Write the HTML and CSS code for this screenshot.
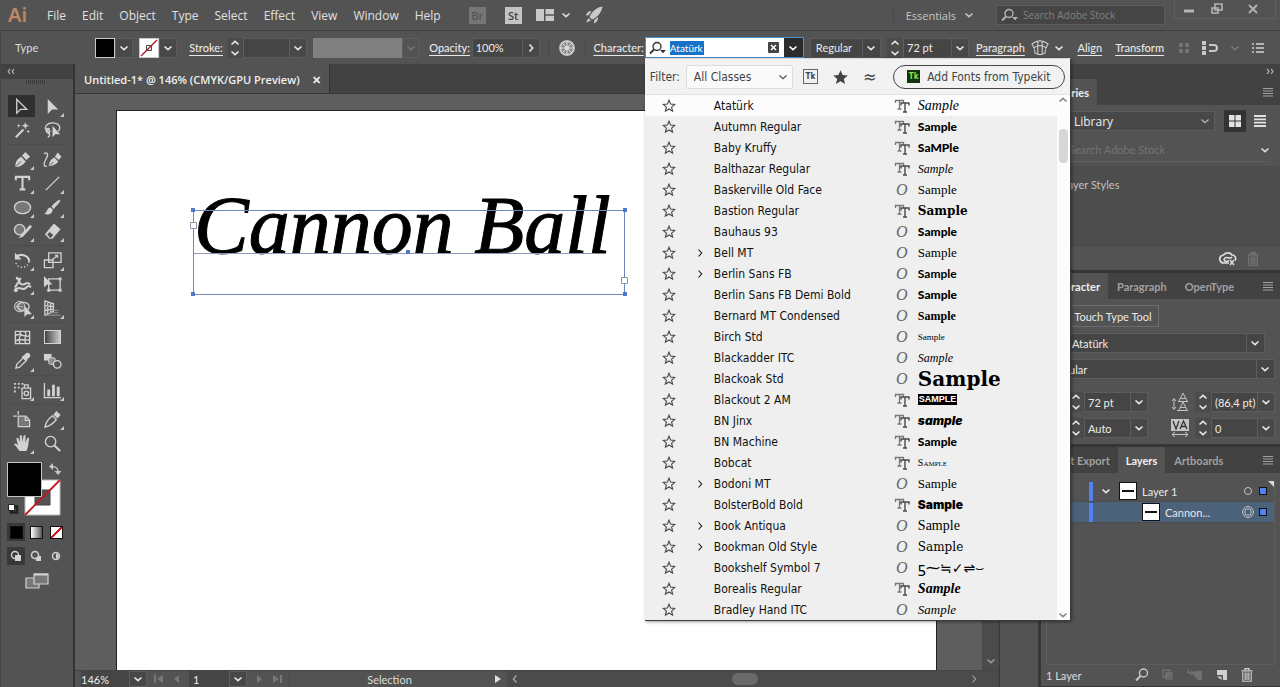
FILE: index.html
```html
<!DOCTYPE html>
<html lang="en">
  <head>
    <meta charset="UTF-8" />
    <meta name="viewport" content="width=device-width, initial-scale=1.0" />
    <title>Untitled-1* @ 146%</title>
    <link rel="stylesheet" href="styles.css">
  </head>
  <body>
    <!-- shared icons -->
    <svg class="sprite" aria-hidden="true">
      <symbol id="star" viewBox="0 0 14 14"><path d="M7 1.2l1.6 3.9 4.2.3-3.2 2.7 1 4.1L7 10l-3.6 2.2 1-4.1L1.2 5.4l4.2-.3z" fill="none" stroke="currentColor" stroke-width="1.1" /></symbol>
      <symbol id="chev" viewBox="0 0 10 10"><path d="M1.5 3.5L5 6.7l3.5-3.2" fill="none" stroke="currentColor" stroke-width="1.6" /></symbol>
      <symbol id="chev-up" viewBox="0 0 10 10"><path d="M1.5 6.5L5 3.3l3.5 3.2" fill="none" stroke="currentColor" stroke-width="1.6" /></symbol>
      <symbol id="chev-right" viewBox="0 0 10 10"><path d="M3.5 1.5L6.7 5 3.5 8.5" fill="none" stroke="currentColor" stroke-width="1.6" /></symbol>
      <symbol id="chev-thin" viewBox="0 0 10 10"><path d="M3.5 1.5L6.7 5 3.5 8.5" fill="none" stroke="currentColor" stroke-width="1.1" /></symbol>
      <symbol id="chev-left" viewBox="0 0 10 10"><path d="M6.5 1.5L3.3 5l3.2 3.5" fill="none" stroke="currentColor" stroke-width="1.2" /></symbol>
      <symbol id="lens" viewBox="0 0 18 14"><circle cx="8" cy="5.5" r="4" fill="none" stroke="currentColor" stroke-width="1.4" /><path d="M5 8.5L1 12.5" stroke="currentColor" stroke-width="1.8" /><path d="M11 9h6l-3 3.2z" fill="currentColor" /></symbol>
      <symbol id="lines" viewBox="0 0 12 10"><path d="M1 1.5h10M1 4h10M1 6.5h10M1 9h10" stroke="currentColor" stroke-width="1.2" /></symbol>
      <symbol id="tt" viewBox="0 0 16 14"><path d="M1.500 4V1.500h8V4M5.500 1.500v8.500M3.500 10h4" fill="none" stroke="#777" stroke-width="1.300" /><path d="M7 6.500V4h8v2.500M11 4v9M9 13h4" fill="none" stroke="#4a4a4a" stroke-width="1.400" /></symbol>
      <symbol id="trash" viewBox="0 0 12 14"><path d="M4 2V.7h4V2M.5 2.8h11" fill="none" stroke="currentColor" stroke-width="1.3" /><path d="M1.8 4v9.3h8.4V4M4.2 4.5v7.5M6 4.5v7.5M7.8 4.5v7.5" fill="none" stroke="currentColor" stroke-width="1.1" /></symbol>
    </svg>

    <header class="menubar">
      <span class="logo">Ai</span>
      <nav class="menus">
        <a href="#">File</a><a href="#">Edit</a><a href="#">Object</a><a href="#">Type</a><a href="#">Select</a><a href="#">Effect</a><a href="#">View</a><a href="#">Window</a><a href="#">Help</a>
      </nav>
      <div class="app-buttons">
        <button class="app-badge off">Br</button>
        <button class="app-badge">St</button>
        <button class="arrange" aria-label="Arrange documents">
          <svg width="18" height="12" viewBox="0 0 18 12"><path d="M0 0h8v12H0zM9.500 0h8.500v5.300H9.500zM9.500 6.700h8.500V12H9.500z" fill="#c8c8c8" /></svg>
          <svg width="10" height="10"><use href="#chev" /></svg>
        </button>
        <button class="icon" aria-label="GPU performance">
          <svg width="18" height="18" viewBox="0 0 18 18"><path d="M17.500.5C11 1.500 6.500 6 4.500 11l2.500 2.500C12 11.500 16.500 7 17.500.5zM6.500 5C3.500 5 1.500 7 .8 9.500l3-.3zM13 11c.5 3-1.500 5.500-4 6.500l.2-3.500zM3.500 12L1 16.500l5-2z" fill="#c8c8c8" /></svg>
        </button>
      </div>
      <button class="essentials">Essentials <svg width="10" height="10"><use href="#chev" /></svg></button>
      <label class="stock-search">
        <svg width="18" height="14"><use href="#lens" /></svg>
        <input type="text" placeholder="Search Adobe Stock" aria-label="Search Adobe Stock" />
      </label>
      <div class="window-buttons">
        <button aria-label="Minimize"><svg width="12" height="12" viewBox="0 0 12 12"><path d="M1 8h10" stroke="#b5b5b5" stroke-width="3" /></svg></button>
        <button aria-label="Restore"><svg width="12" height="12" viewBox="0 0 12 12"><path d="M4 1h7v6H4zM1 5h6v5H1z" fill="#535353" stroke="#b5b5b5" stroke-width="1.600" /></svg></button>
        <button aria-label="Close"><svg width="12" height="12" viewBox="0 0 12 12"><path d="M2 2l8 8M10 2l-8 8" stroke="#b5b5b5" stroke-width="1.800" /></svg></button>
      </div>
    </header>

    <div class="controlbar">
      <span class="mode">Type</span>
      <div class="swatch-group">
        <button class="swatch black" aria-label="Fill"></button>
        <button class="drop" aria-label="Fill options"><svg width="10" height="10"><use href="#chev" /></svg></button>
      </div>
      <div class="swatch-group">
        <button class="swatch" aria-label="Stroke color"><svg width="18" height="18" viewBox="0 0 18 18"><path d="M6.500 6.500h5v5h-5z" fill="#fff" stroke="#444" /><path d="M1 17L17 1" stroke="#b0202a" stroke-width="1.500" /></svg></button>
        <button class="drop" aria-label="Stroke color options"><svg width="10" height="10"><use href="#chev" /></svg></button>
      </div>
      <label class="link stroke-label" for="stroke">Stroke:</label>
      <div class="spin stroke-spin">
        <div class="stepper"><button aria-label="Up"><svg width="10" height="10"><use href="#chev-up" /></svg></button><button aria-label="Down"><svg width="10" height="10"><use href="#chev" /></svg></button></div>
        <input id="stroke" type="text" />
        <button class="drop" aria-label="Stroke presets"><svg width="10" height="10"><use href="#chev" /></svg></button>
      </div>
      <div class="profile"><span></span><button class="drop off" aria-label="Variable width profile"><svg width="10" height="10"><use href="#chev" /></svg></button></div>
      <label class="link opacity-label" for="opacity">Opacity:</label>
      <div class="spin opacity-spin">
        <input id="opacity" type="text" value="100%" />
        <button class="drop" aria-label="Opacity slider"><svg width="10" height="10"><use href="#chev-right" /></svg></button>
      </div>
      <button class="recolor" aria-label="Recolor artwork">
        <svg width="18" height="18" viewBox="0 0 18 18"><circle cx="9" cy="9" r="8" fill="#b9b9b9" /><circle cx="9" cy="9" r="6.500" fill="#8b8b8b" stroke="#ddd" /><path d="M9 2v14M2 9h14M4 4l10 10M14 4L4 14" stroke="#ddd" stroke-width="1" /><circle cx="9" cy="9" r="2" fill="#ddd" /></svg>
      </button>
      <label class="link char-label" for="font">Character:</label>
      <div class="font-combo">
        <svg width="18" height="14"><use href="#lens" /></svg>
        <span class="font-value"><input id="font" type="text" value="Atatürk" /></span>
        <button class="clear" aria-label="Clear"><svg width="11" height="11" viewBox="0 0 11 11"><rect width="11" height="11" rx="1" fill="#444" /><path d="M3 3l5 5M8 3L3 8" stroke="#fff" stroke-width="1.500" /></svg></button>
        <button class="open" aria-label="Font list"><svg width="10" height="10"><use href="#chev" /></svg></button>

        <div class="font-menu">
          <div class="filter-bar">
            <label for="classes">Filter:</label>
            <select id="classes"><option>All Classes</option></select>
            <button class="tk-filter" aria-label="Show Typekit fonts">Tk</button>
            <button class="icon" aria-label="Show favorite fonts"><svg width="15" height="14" viewBox="0 0 15 14"><path d="M7.500.3l2.100 4.800 5.200.4-4 3.400 1.300 5-4.600-2.700-4.600 2.700 1.300-5-4-3.400 5.200-.4z" fill="#444" /></svg></button>
            <button class="similar" aria-label="Show similar fonts">≈</button>
            <button class="typekit"><span class="tk">Tk</span>Add Fonts from Typekit</button>
          </div>
          <div class="font-scroll">
            <ul class="font-list">
              <li class="current"><button aria-label="Favorite"><svg><use href="#star" /></svg></button><i></i><span>Atatürk</span><b class="kind"><svg><use href="#tt" /></svg></b><em class="s-script">Sample</em></li>
              <li><button aria-label="Favorite"><svg><use href="#star" /></svg></button><i></i><span>Autumn Regular</span><b class="kind"><svg><use href="#tt" /></svg></b><em class="s-black">Sample</em></li>
              <li><button aria-label="Favorite"><svg><use href="#star" /></svg></button><i></i><span>Baby Kruffy</span><b class="kind"><svg><use href="#tt" /></svg></b><em class="s-black">SaMPle</em></li>
              <li><button aria-label="Favorite"><svg><use href="#star" /></svg></button><i></i><span>Balthazar Regular</span><b class="kind"><svg><use href="#tt" /></svg></b><em class="s-hand">Sample</em></li>
              <li><button aria-label="Favorite"><svg><use href="#star" /></svg></button><i></i><span>Baskerville Old Face</span><b class="kind ot">O</b><em class="s-serif">Sample</em></li>
              <li><button aria-label="Favorite"><svg><use href="#star" /></svg></button><i></i><span>Bastion Regular</span><b class="kind"><svg><use href="#tt" /></svg></b><em class="s-slab">Sample</em></li>
              <li><button aria-label="Favorite"><svg><use href="#star" /></svg></button><i></i><span>Bauhaus 93</span><b class="kind ot">O</b><em class="s-black">Sample</em></li>
              <li><button aria-label="Favorite"><svg><use href="#star" /></svg></button><i><svg><use href="#chev-thin" /></svg></i><span>Bell MT</span><b class="kind ot">O</b><em class="s-serif">Sample</em></li>
              <li><button aria-label="Favorite"><svg><use href="#star" /></svg></button><i><svg><use href="#chev-thin" /></svg></i><span>Berlin Sans FB</span><b class="kind ot">O</b><em class="s-semi">Sample</em></li>
              <li><button aria-label="Favorite"><svg><use href="#star" /></svg></button><i></i><span>Berlin Sans FB Demi Bold</span><b class="kind ot">O</b><em class="s-black">Sample</em></li>
              <li><button aria-label="Favorite"><svg><use href="#star" /></svg></button><i></i><span>Bernard MT Condensed</span><b class="kind ot">O</b><em class="s-bernard">Sample</em></li>
              <li><button aria-label="Favorite"><svg><use href="#star" /></svg></button><i></i><span>Birch Std</span><b class="kind ot">O</b><em class="s-birch">Sample</em></li>
              <li><button aria-label="Favorite"><svg><use href="#star" /></svg></button><i></i><span>Blackadder ITC</span><b class="kind ot">O</b><em class="s-hand">Sample</em></li>
              <li><button aria-label="Favorite"><svg><use href="#star" /></svg></button><i></i><span>Blackoak Std</span><b class="kind ot">O</b><em class="s-wide">Sample</em></li>
              <li><button aria-label="Favorite"><svg><use href="#star" /></svg></button><i></i><span>Blackout 2 AM</span><b class="kind"><svg><use href="#tt" /></svg></b><em class="s-blackout">SAMPLE</em></li>
              <li><button aria-label="Favorite"><svg><use href="#star" /></svg></button><i></i><span>BN Jinx</span><b class="kind"><svg><use href="#tt" /></svg></b><em class="s-jinx">sample</em></li>
              <li><button aria-label="Favorite"><svg><use href="#star" /></svg></button><i></i><span>BN Machine</span><b class="kind"><svg><use href="#tt" /></svg></b><em class="s-black">Sample</em></li>
              <li><button aria-label="Favorite"><svg><use href="#star" /></svg></button><i></i><span>Bobcat</span><b class="kind"><svg><use href="#tt" /></svg></b><em class="s-bobcat">Sample</em></li>
              <li><button aria-label="Favorite"><svg><use href="#star" /></svg></button><i><svg><use href="#chev-thin" /></svg></i><span>Bodoni MT</span><b class="kind ot">O</b><em class="s-serif">Sample</em></li>
              <li><button aria-label="Favorite"><svg><use href="#star" /></svg></button><i></i><span>BolsterBold Bold</span><b class="kind"><svg><use href="#tt" /></svg></b><em class="s-bolster">Sample</em></li>
              <li><button aria-label="Favorite"><svg><use href="#star" /></svg></button><i><svg><use href="#chev-thin" /></svg></i><span>Book Antiqua</span><b class="kind ot">O</b><em class="s-book">Sample</em></li>
              <li><button aria-label="Favorite"><svg><use href="#star" /></svg></button><i><svg><use href="#chev-thin" /></svg></i><span>Bookman Old Style</span><b class="kind ot">O</b><em class="s-bookman">Sample</em></li>
              <li><button aria-label="Favorite"><svg><use href="#star" /></svg></button><i></i><span>Bookshelf Symbol 7</span><b class="kind ot">O</b><em class="s-symbol">ƽ⁓≒✓⇌⌣</em></li>
              <li><button aria-label="Favorite"><svg><use href="#star" /></svg></button><i></i><span>Borealis Regular</span><b class="kind"><svg><use href="#tt" /></svg></b><em class="s-script heavy">Sample</em></li>
              <li><button aria-label="Favorite"><svg><use href="#star" /></svg></button><i></i><span>Bradley Hand ITC</span><b class="kind ot">O</b><em class="s-bradley">Sample</em></li>
            </ul>
            <div class="menu-scrollbar">
              <svg width="10" height="10"><use href="#chev-up" /></svg>
              <span class="thumb"></span>
              <svg width="10" height="10"><use href="#chev" /></svg>
            </div>
          </div>
        </div>
      </div>
      <select class="style-select" aria-label="Font style"><option>Regular</option></select>
      <div class="spin size-spin">
        <div class="stepper"><button aria-label="Up"><svg width="10" height="10"><use href="#chev-up" /></svg></button><button aria-label="Down"><svg width="10" height="10"><use href="#chev" /></svg></button></div>
        <input type="text" value="72 pt" aria-label="Font size" />
        <button class="drop" aria-label="Font sizes"><svg width="10" height="10"><use href="#chev" /></svg></button>
      </div>
      <a class="link paragraph-link" href="#">Paragraph</a>
      <button class="envelope" aria-label="Make envelope">
        <svg width="18" height="16" viewBox="0 0 18 16"><path d="M1 4c5-4 11-4 16 0-2 3-3 6-3 9-3 2-7 2-10 0 0-3-1-6-3-9zM2.500 8c4-3 9-3 13 0M7 1.500c-.5 5-.5 8 0 13M11 1.500c.5 5 .5 8 0 13" fill="none" stroke="#c8c8c8" stroke-width="1.200" /></svg>
        <svg width="10" height="10"><use href="#chev" /></svg>
      </button>
      <a class="link align-link" href="#">Align</a>
      <a class="link" href="#">Transform</a>
      <div class="bar-end">
        <svg width="12" height="12" viewBox="0 0 12 12"><path d="M1 1h4v4H1zM7 1h4v4H7zM1 7h4v4H1zM7 7h4v4H7z" fill="#747474" /></svg>
        <svg width="16" height="14" viewBox="0 0 16 14"><path d="M0 0h4v4H0zM0 5h4v4H0zM0 10h4v4H0z" fill="#c8c8c8" /><path d="M7 4h5a2.500 2.500 0 0 1 0 6H7" fill="none" stroke="#c8c8c8" stroke-width="2" /></svg>
        <svg class="dim" width="10" height="10"><use href="#chev" /></svg>
        <button class="icon" aria-label="Panel options"><svg width="12" height="10" viewBox="0 0 12 10"><path d="M0 1h2M0 5h2M0 9h2M4 1h8M4 5h8M4 9h8" stroke="#d5d5d5" stroke-width="1.500" /></svg></button>
      </div>
    </div>

    <div class="workspace">
      <aside class="toolbox">
        <div class="collapse left">‹‹</div>
        <div class="grip"></div>
        <div class="tools">
          <button class="active" aria-label="Selection"><svg viewBox="0 0 20 20"><path d="M5 2.500v14.500l4-4h6.500z" class="ln" /></svg></button>
          <button class="more" aria-label="Direct selection"><svg viewBox="0 0 20 20"><path d="M5 2v16l4.500-4.800H16z" class="fl" /></svg></button>
          <button aria-label="Magic wand"><svg viewBox="0 0 20 20"><path d="M3 17l8-8" class="ln thick" /><path d="M13 1l1 3 3 1-3 1-1 3-1-3-3-1 3-1zM6 3l.6 1.400L8 5l-1.400.6L6 7l-.6-1.400L4 5l1.400-.6zM16 9l.6 1.400 1.400.6-1.400.6L16 13l-.6-1.400L14 11l1.400-.6z" class="fl" /></svg></button>
          <button aria-label="Lasso"><svg viewBox="0 0 20 20"><path d="M4.500 11C0 7 4 2 10 2s10 4 6 9M7 8c-3-1-5 1-3 4 2 2 4 0 3-2s-3-1-1.500 1.500S8 16 5 17" class="ln" /><path d="M10 5v12l3-3h5z" class="fl" /></svg></button>
          <hr />
          <button class="more" aria-label="Pen"><svg viewBox="0 0 20 20"><path d="M2.500 18c0-5 1-8 6-11l5 5c-3 4-6 5.500-11 6zM9.500 6L13 2l5 5-4 3.500z" class="fl" /><path d="M3 17.500l5.500-5.500" stroke="#535353" /></svg></button>
          <button aria-label="Curvature"><svg viewBox="0 0 20 20"><path d="M6 17c1-5 2-7 6-9l4 4c-2 3-5 4.500-10 5zM12.500 7L15.500 2.500l4 4.500-3 3.500z" class="fl" /><path d="M1 4c4-3 5 1 2 6s-2 8 1 7" class="ln" /><path d="M7 16.500l4-4" stroke="#535353" /></svg></button>
          <button class="more" aria-label="Type"><svg viewBox="0 0 20 20"><path d="M3 6.500V3h14v3.500M10 3v13M7 16.200h6" class="ln thick" /></svg></button>
          <button class="more" aria-label="Line segment"><svg viewBox="0 0 20 20"><path d="M3 17L17 3" class="ln" /></svg></button>
          <button class="more" aria-label="Ellipse"><svg viewBox="0 0 20 20"><ellipse cx="10" cy="10" rx="8.500" ry="6.500" fill="#787878" stroke="#d2d2d2" stroke-width="1.400" /></svg></button>
          <button class="more" aria-label="Paintbrush"><svg viewBox="0 0 20 20"><path d="M18 2c-1-1-7 4-9 7l2 2.500c3-3 8-8 7-9.500zM8 10c-4 0-3 5-6.500 6.500 4 2 8.500 0 8.700-4.500z" class="fl" /></svg></button>
          <button class="more" aria-label="Shaper"><svg viewBox="0 0 20 20"><circle cx="7" cy="8" r="5.500" fill="#787878" stroke="#d2d2d2" stroke-width="1.400" /><path d="M18 3L9 13l-3 4 4.500-1.500L20 5z" class="fl" /></svg></button>
          <button class="more" aria-label="Eraser"><svg viewBox="0 0 20 20"><path d="M11.500 1.500l7 6-8.500 10H6.500L2 13z" class="fl" /><path d="M4.500 13.200L7 10.400l3.800 3.200-2.500 2.900h-1z" fill="#535353" /></svg></button>
          <hr />
          <button class="more" aria-label="Rotate"><svg viewBox="0 0 20 20"><path d="M4 6c4-4 13-1 13 5" class="ln thick" /><path d="M17 11c-1 8-13 8-14 1" class="ln" stroke-dasharray="1.500 2" /><path d="M2 1.500V9h7z" class="fl" /></svg></button>
          <button class="more" aria-label="Scale"><svg viewBox="0 0 20 20"><path d="M6 2h13v10H6zM1.500 9.500h9v8h-9z" class="ln" /><path d="M10 9l5-4" class="ln" /><path d="M12 4h4v4z" class="fl" /></svg></button>
          <button class="more" aria-label="Width"><svg viewBox="0 0 20 20"><path d="M3 3c5 0 2 7 7 7s4-4 8 0M2 16c4-6 8 1 11-2s4-3 6-1M8 3c-2 5-4 7-6 10" class="ln thick" /><circle cx="3" cy="16" r="2" class="fl" /></svg></button>
          <button aria-label="Free transform"><svg viewBox="0 0 20 20"><path d="M6 4h12v12H6z" class="ln" /><path d="M1 1v12l3.500-3H10z" class="fl" /><path d="M16.500 2.500h3v3h-3zM16.500 14.500h3v3h-3zM4.500 14.500h3v3h-3z" class="fl" /></svg></button>
          <button class="more" aria-label="Shape builder"><svg viewBox="0 0 20 20"><circle cx="7" cy="8" r="5.500" fill="#787878" stroke="#d2d2d2" /><ellipse cx="11" cy="8" rx="6" ry="4.500" class="ln" /><path d="M3 8h8" class="ln" stroke-dasharray="1 1" /><path d="M12 7v12l3-3h5z" class="fl" /></svg></button>
          <button class="more" aria-label="Perspective grid"><svg viewBox="0 0 20 20"><path d="M2 2v15l9-4V5zM5 3v13M8 4v11M2 7l9 1M2 12l9-1" class="ln" /><path d="M2 17h17M8 14.500h8M11 12h5" stroke="#999" /></svg></button>
          <hr />
          <button aria-label="Mesh"><svg viewBox="0 0 20 20"><path d="M2.500 3.500h15v13h-15zM2.500 8c6-4 9 3 15 0M2.500 14c4-5 9 1 15-2M7 3.500c4 4-4 8 1 13M12 3.500c5 4-3 9 2 13" class="ln" /></svg></button>
          <button aria-label="Gradient"><span class="gradient-tool"></span></button>
          <button class="more" aria-label="Eyedropper"><svg viewBox="0 0 20 20"><path d="M3 17l1-4 7-7 3 3-7 7z" class="ln" /><path d="M9 5l2-1 3-3c3-1 5 2 4 4l-3 3-1 2z" class="fl" /></svg></button>
          <button aria-label="Blend"><svg viewBox="0 0 20 20"><path d="M1 2h8v7H1z" class="fl" /><rect x="6" y="6" width="7" height="7" rx="2" fill="#8d8d8d" stroke="#d2d2d2" /><circle cx="15" cy="13" r="4" fill="#535353" stroke="#d2d2d2" stroke-width="1.400" /></svg></button>
          <hr />
          <button class="more" aria-label="Symbol sprayer"><svg viewBox="0 0 20 20"><path d="M9.500 7.500h9v11h-9zM12 7V4h4v3" class="ln" /><circle cx="14" cy="13" r="2.300" class="ln" /><path d="M1 2h2v2H1zM5 2h2v2H5zM9 2h2v2H9zM1 6h2v2H1zM5 6h2v2H5zM1 10h2v2H1z" class="fl" /></svg></button>
          <button class="more" aria-label="Column graph"><svg viewBox="0 0 20 20"><path d="M1.500 2v15.500H19" class="ln" /><path d="M4.500 9h3v7h-3zM9.500 4h3v12h-3zM14.500 6h3v10h-3z" class="fl" /></svg></button>
          <hr />
          <button aria-label="Artboard"><svg viewBox="0 0 20 20"><path d="M5.500 6.500h8l4 4v7h-12z" fill="#787878" stroke="#d2d2d2" stroke-width="1.300" /><path d="M0 6.500h4M5.500 1v4M13 7v4h4" class="ln" /></svg></button>
          <button class="more" aria-label="Slice"><svg viewBox="0 0 20 20"><path d="M2 18c1-5 4-9 8-12l4 4c-3 4-7 7-12 8z" class="ln" /><path d="M11 5l3-4 4.500 4-3 4z" class="fl" /></svg></button>
          <button class="more" aria-label="Hand"><svg viewBox="0 0 20 20"><path d="M7 18c-2-2-3-5-6-7 1-2 3-1 4.500 1L3.500 5c1-2 2-1 2.300 0L7.500 9 7 2.500c1-2 2-1.500 2.300 0L10 8.500 11 2c1-1.500 2-.7 2.200.5L13 9l2-4.500c1-1 2.200-.2 1.800 1L16 12c-.5 3-1 4-2 6z" class="fl" /></svg></button>
          <button aria-label="Zoom"><svg viewBox="0 0 20 20"><circle cx="8" cy="8" r="5.500" class="ln" /><path d="M12 12l6 6" class="ln thick" /></svg></button>
        </div>
        <!-- fill / stroke indicator -->
        <svg class="fill-stroke" width="56" height="56" viewBox="0 0 56 56">
          <path d="M18 18h35v35H18z" fill="#fff" stroke="#bbb" />
          <path d="M28 28h15v15H28z" fill="#535353" stroke="#444" />
          <path d="M18 53L53 18" stroke="#c01820" stroke-width="1.800" />
          <path d="M.5.500h34v34H.5z" fill="#000" stroke="#c4c4c4" />
          <path d="M45 4.500c5 0 6 2 6 6" fill="none" stroke="#c8c8c8" stroke-width="1.500" /><path d="M46 1v7l-4-3.500zM47.500 9h7L51 13z" fill="#c8c8c8" />
          <path d="M4 44.500h6v6H4z" fill="none" stroke="#222" stroke-width="2.500" /><path d="M1.500 42.500h6v6h-6z" fill="#fff" stroke="#222" />
        </svg>
        <div class="color-modes">
          <button class="on" aria-label="Color"><span class="chip solid"></span></button>
          <button aria-label="Gradient"><span class="chip fade"></span></button>
          <button aria-label="None"><span class="chip none"></span></button>
        </div>
        <div class="color-modes">
          <button class="on" aria-label="Draw normal"><svg width="12" height="12" viewBox="0 0 12 12"><circle cx="5" cy="5" r="3.500" class="ln" /><path d="M5 5h6v6H5z" class="fl" /></svg></button>
          <button aria-label="Draw behind"><svg width="12" height="12" viewBox="0 0 12 12"><path d="M6 6h5v5H6z" class="fl" /><circle cx="5" cy="5" r="3.500" fill="#535353" stroke="#d2d2d2" stroke-width="1.500" /></svg></button>
          <button aria-label="Draw inside"><svg width="12" height="12" viewBox="0 0 12 12"><circle cx="6" cy="6" r="3.500" class="ln" /><path d="M6 6V3.500A2.500 2.500 0 0 1 8.500 6z" class="fl" /><path d="M6 6h2.500v2.500H6z" class="fl" /></svg></button>
        </div>
        <button class="screen-mode" aria-label="Screen mode"><svg width="24" height="16" viewBox="0 0 24 16"><path d="M1 5h13v10H1z" fill="#787878" stroke="#d2d2d2" stroke-width="1.200" /><path d="M9 1h14v10H9z" fill="#787878" stroke="#d2d2d2" stroke-width="1.200" /><path d="M9 1.500h14" stroke="#d2d2d2" stroke-width="2" /></svg></button>
      </aside>

      <main class="document">
        <div class="doc-tabs">
          <div class="doc-tab">Untitled-1* @ 146% (CMYK/GPU Preview)<button aria-label="Close document">✕</button></div>
        </div>
        <div class="canvas-row">
          <div class="canvas">
            <div class="artboard">
              <svg class="artwork" width="450" height="150" viewBox="0 -30 450 150">
                <text x="10" y="65" class="headline">Cannon Ball</text>
                <path d="M9 65.500h402" stroke="#8c9ab8" />
                <path d="M9.500 22.500h431v84H9.500z" fill="none" stroke="#6d86bd" />
                <path d="M7 20h4v4H7zM439 20h4v4h-4zM7 104h4v4H7zM439 104h4v4h-4zM222 62h4v4h-4z" fill="#5078c8" />
                <path d="M6.500 34.500h6v6h-6zM437.500 89.500h6v6h-6z" fill="#fff" stroke="#8a93a8" />
              </svg>
            </div>
          </div>
          <div class="v-scroll"><svg width="10" height="10"><use href="#chev" /></svg></div>
        </div>
        <div class="statusbar">
          <input class="zoom" type="text" value="146%" aria-label="Zoom" />
          <button class="drop" aria-label="Zoom levels"><svg width="10" height="10"><use href="#chev" /></svg></button>
          <div class="pager">
            <button aria-label="First"><svg width="10" height="8" viewBox="0 0 10 8"><path d="M0 0h2v8H0zM9 0v8L3 4z" /></svg></button>
            <button aria-label="Previous"><svg width="10" height="8" viewBox="0 0 10 8"><path d="M7 0v8L2 4z" /></svg></button>
          </div>
          <input class="page" type="text" value="1" aria-label="Artboard number" />
          <button class="drop" aria-label="Artboards"><svg width="10" height="10"><use href="#chev" /></svg></button>
          <div class="pager">
            <button aria-label="Next"><svg width="10" height="8" viewBox="0 0 10 8"><path d="M3 0v8l5-4z" /></svg></button>
            <button aria-label="Last"><svg width="10" height="8" viewBox="0 0 10 8"><path d="M1 0v8l6-4zM8 0h2v8H8z" /></svg></button>
          </div>
          <span class="tool-name">Selection</span>
          <button class="play" aria-label="Status options"><svg width="8" height="8" viewBox="0 0 8 8"><path d="M1 0v8l6-4z" fill="#e0e0e0" /></svg></button>
          <div class="h-scroll">
            <svg width="10" height="10"><use href="#chev-left" /></svg>
            <span></span>
            <svg width="10" height="10"><use href="#chev-thin" /></svg>
          </div>
        </div>
      </main>

      <div class="rail"><div class="collapse"></div></div>

      <aside class="panels">
        <div class="collapse">››</div>
        <section class="panel">
          <div class="tabs"><button class="selected libraries">Libraries</button><svg width="12" height="10"><use href="#lines" /></svg></div>
          <div class="library-bar">
            <select class="plain" aria-label="Library"><option>My Library</option></select>
            <button class="view on" aria-label="Grid view"><svg width="12" height="12" viewBox="0 0 12 12"><path d="M0 0h5.500v5.500H0zM6.500 0H12v5.500H6.500zM0 6.500h5.500V12H0zM6.500 6.500H12V12H6.500z" fill="#e2e2e2" /></svg></button>
            <button class="view" aria-label="List view"><svg width="12" height="12" viewBox="0 0 12 12"><path d="M0 1h12M0 4.300h12M0 7.600h12M0 11h12" stroke="#e2e2e2" stroke-width="1.800" /></svg></button>
          </div>
          <label class="library-search"><input type="text" placeholder="Search Adobe Stock" aria-label="Search library" /><svg width="10" height="10"><use href="#chev" /></svg></label>
          <div class="library-content">Layer Styles</div>
          <div class="panel-foot">
            <svg width="18" height="14" viewBox="0 0 18 14"><path d="M10 11H5a4 4 0 0 1-.5-8C6 .5 11 0 13 3c3 0 4.500 3 3 5.500M10 8.500C6 11 4 8 6 6s5 2 7-1" fill="none" stroke="#dedede" stroke-width="1.700" /><path d="M11 8l4 5M15 8l-4 5" stroke="#dedede" stroke-width="1.500" /></svg>
            <svg class="dim" width="12" height="14"><use href="#trash" /></svg>
          </div>
        </section>

        <section class="panel">
          <div class="tabs"><button class="selected char-tab">Character</button><button>Paragraph</button><button>OpenType</button><svg width="12" height="10"><use href="#lines" /></svg></div>
          <div class="character">
            <button class="touch">Touch Type Tool</button>
            <select class="family" aria-label="Font family"><option>Atatürk</option></select>
            <select class="face" aria-label="Font style"><option>Regular</option></select>
            <div class="metrics">
              <span></span>
              <div class="spin">
                <div class="stepper"><button aria-label="Up"><svg width="10" height="10"><use href="#chev-up" /></svg></button><button aria-label="Down"><svg width="10" height="10"><use href="#chev" /></svg></button></div>
                <input type="text" value="72 pt" aria-label="Size" />
                <button class="drop" aria-label="Sizes"><svg width="10" height="10"><use href="#chev" /></svg></button>
              </div>
              <svg width="18" height="18" viewBox="0 0 18 18"><path d="M8 8l4-8 4 8M9.500 5.500h5M8 17l4-8 4 8M9.500 14.500h5M7 8.500h10M6 17.500h11M3 6v10M1 8l2-2.500L5 8M1 14l2 2.500L5 14" fill="none" stroke="#c4c4c4" /></svg>
              <div class="spin">
                <div class="stepper"><button aria-label="Up"><svg width="10" height="10"><use href="#chev-up" /></svg></button><button aria-label="Down"><svg width="10" height="10"><use href="#chev" /></svg></button></div>
                <input type="text" value="(86,4 pt)" aria-label="Leading" />
                <button class="drop" aria-label="Leadings"><svg width="10" height="10"><use href="#chev" /></svg></button>
              </div>
              <span></span>
              <div class="spin">
                <div class="stepper"><button aria-label="Up"><svg width="10" height="10"><use href="#chev-up" /></svg></button><button aria-label="Down"><svg width="10" height="10"><use href="#chev" /></svg></button></div>
                <input type="text" value="Auto" aria-label="Kerning" />
                <button class="drop" aria-label="Kernings"><svg width="10" height="10"><use href="#chev" /></svg></button>
              </div>
              <svg width="18" height="18" viewBox="0 0 18 18"><path d="M0 0h18v12H0z" fill="#c4c4c4" /><path d="M2 2l3 8 3-8M9 10l3.500-8 3.500 8M10.500 7.500h4" fill="none" stroke="#333" stroke-width="1.300" /><path d="M1 15.500h16M4 13l-3 2.500L4 18M14 13l3 2.500-3 2.500" fill="none" stroke="#c4c4c4" /></svg>
              <div class="spin">
                <div class="stepper"><button aria-label="Up"><svg width="10" height="10"><use href="#chev-up" /></svg></button><button aria-label="Down"><svg width="10" height="10"><use href="#chev" /></svg></button></div>
                <input type="text" value="0" aria-label="Tracking" />
                <button class="drop" aria-label="Trackings"><svg width="10" height="10"><use href="#chev" /></svg></button>
              </div>
            </div>
          </div>
        </section>

        <section class="panel layers-panel">
          <div class="tabs"><button class="first">Asset Export</button><button class="selected">Layers</button><button>Artboards</button><svg width="12" height="10"><use href="#lines" /></svg></div>
          <div class="layers">
            <div class="layer">
              <span class="bar"></span><svg class="twist" width="10" height="10"><use href="#chev" /></svg><span class="thumb-img"></span><span class="layer-name">Layer 1</span>
              <svg width="12" height="12" viewBox="0 0 12 12"><circle cx="6" cy="6" r="3.500" fill="none" stroke="#c8c8c8" /></svg><span class="mark"></span>
              <span class="corner"></span>
            </div>
            <div class="layer child">
              <span class="bar"></span><span class="thumb-img"></span><span class="layer-name">Cannon...</span>
              <svg width="12" height="12" viewBox="0 0 12 12"><circle cx="6" cy="6" r="5.400" fill="none" stroke="#c8c8c8" /><circle cx="6" cy="6" r="3.300" fill="none" stroke="#c8c8c8" /></svg><span class="mark"></span>
            </div>
          </div>
          <div class="layers-foot">
            <span>1 Layer</span>
            <button aria-label="Locate object"><svg width="14" height="14" viewBox="0 0 14 14"><circle cx="8.500" cy="5" r="4" fill="none" stroke="#c8c8c8" stroke-width="1.400" /><path d="M5.500 8L1 12.500" stroke="#c8c8c8" stroke-width="2" /></svg></button>
            <button aria-label="Clipping mask"><svg width="14" height="14" viewBox="0 0 14 14"><path d="M2 2h7v7H2zM5 5h6v6H5z" fill="none" stroke="#707070" stroke-width="1.300" /><path d="M5 5h4v4H5z" fill="#707070" /></svg></button>
            <button aria-label="New sublayer"><svg width="16" height="14" viewBox="0 0 16 14"><path d="M1 1v4h5M4 3l2.500 2L4 7" fill="none" stroke="#707070" stroke-width="1.300" /><path d="M7 3h8v9h-4l-4-4z" fill="#707070" /></svg></button>
            <button aria-label="New layer"><svg width="14" height="14" viewBox="0 0 14 14"><path d="M2 2h10v10H8V7H2z" fill="#d0d0d0" /><path d="M2 8.500h4.500V12z" fill="#d0d0d0" /></svg></button>
            <button aria-label="Delete"><svg class="bright" width="12" height="14"><use href="#trash" /></svg></button>
          </div>
        </section>
      </aside>
    </div>
  </body>
</html>
```

FILE: styles.css
```css
* {
  box-sizing: border-box;
}

body {
  margin: 0;
  height: 100vh;
  display: flex;
  flex-direction: column;
  overflow: hidden;
  background: #535353;
  color: #dcdcdc;
  font-family: Lato, "Noto Sans", sans-serif;
  font-size: 11px;
}

button,
input,
select {
  font: inherit;
  color: inherit;
  margin: 0;
  padding: 0;
  border: 0;
  background: none;
  border-radius: 0;
  min-width: 0;
}

button {
  display: flex;
  align-items: center;
  justify-content: center;
  cursor: pointer;
}

select {
  appearance: none;
}

svg {
  display: block;
  flex: none;
}

.sprite {
  position: absolute;
  width: 0;
  height: 0;
}

.ln {
  fill: none;
  stroke: #d2d2d2;
  stroke-width: 1.4;
}

.thick {
  stroke-width: 2.2;
}

.fl {
  fill: #d2d2d2;
}

.dim {
  color: #7a7a7a;
}

/* menu bar */
.menubar {
  display: flex;
  align-items: center;
  height: 31px;
  flex: none;
  border-bottom: 1px solid #404040;
  font-family: "Open Sans", "Noto Sans", sans-serif;
  font-size: 12px;
}

.logo {
  width: 40px;
  padding-left: 8px;
  color: #c08763;
  font-family: "Noto Sans", sans-serif;
  font-size: 20px;
  font-weight: 600;
  line-height: 28px;
}

.menus {
  display: flex;
  gap: 16px;
  padding: 0 28px 0 7px;
}

.menus a {
  color: #e0e0e0;
  text-decoration: none;
}

.app-buttons {
  display: flex;
  align-items: center;
  gap: 14px;
}

.app-badge {
  width: 17px;
  height: 17px;
  background: #c4c4c4;
  color: #444;
  font-size: 11px;
  font-weight: 600;
}

.app-badge.off {
  margin-right: 5px;
  background: #767676;
  color: #555;
}

.arrange {
  gap: 7px;
}

.essentials {
  margin-left: auto;
  gap: 8px;
  color: #c4c4c4;
  font-size: 11px;
  border-left: 1px solid #4a4a4a;
  padding: 0 12px;
}

.stock-search {
  display: flex;
  align-items: center;
  gap: 4px;
  width: 169px;
  height: 20px;
  margin: 0 9px 0 10px;
  padding-left: 4px;
  background: #454545;
  border: 1px solid #5d5d5d;
  color: #b5b5b5;
}

.stock-search input {
  flex: 1;
  font-size: 10px;
}

::placeholder {
  color: #828282;
  opacity: 1;
}

.window-buttons {
  display: flex;
  align-self: flex-start;
  margin-right: 4px;
  border: 1px solid #5f5f5f;
  border-top: 0;
}

.window-buttons button {
  width: 28px;
  height: 18px;
}

.window-buttons button:last-child {
  width: 44px;
}

/* control bar */
.controlbar {
  display: flex;
  align-items: center;
  height: 33px;
  flex: none;
  border-left: 1px solid #444;
}

.mode {
  width: 81px;
  padding-left: 14px;
  line-height: 16px;
}

.swatch-group {
  display: flex;
  margin: 0 0 0 14px;
  width: 38px;
}

.swatch-group + .swatch-group {
  margin-left: 6px;
}

.swatch {
  width: 20px;
  height: 20px;
  border: 1px solid #c8c8c8;
  background: #fff;
}

.swatch.black {
  background: #000;
}

.drop {
  width: 18px;
  height: 20px;
  border: 1px solid #5d5d5d;
  background: #484848;
  color: #e8e8e8;
}

.drop.off {
  color: #757575;
  background: none;
}

.link {
  color: #e8e8e8;
  text-decoration: underline;
  text-underline-offset: 3px;
  font-weight: 500;
}

.stroke-label {
  width: 38px;
  margin-left: 12px;
}

.spin {
  display: flex;
  height: 20px;
}

.spin input {
  flex: 1;
  width: 0;
  padding-left: 3px;
  background: #454545;
  border: 1px solid #5d5d5d;
  border-right: 0;
  color: #ececec;
}

.stepper {
  width: 16px;
  background: #4b4b4b;
  color: #e8e8e8;
}

.stepper button {
  width: 16px;
  height: 10px;
}

.stroke-spin {
  width: 81px;
}

.profile {
  display: flex;
  width: 109px;
  margin: 0 9px 0 6px;
}

.profile span {
  flex: 1;
  background: #808080;
}

.opacity-label {
  width: 43px;
}

.opacity-spin {
  width: 69px;
}

.recolor {
  height: 20px;
  margin-left: 8px;
  padding: 0 9px;
  border-left: 1px solid #484848;
  border-right: 1px solid #484848;
}

.char-label {
  width: 52px;
  margin-left: 8px;
}

.font-combo {
  position: relative;
  display: flex;
  align-items: center;
  width: 161px;
  height: 21px;
  padding-left: 3px;
  border: 1px solid #4a90d2;
  background: #fff;
  color: #333;
}

.font-value {
  flex: 1;
  padding-left: 3px;
}

.font-value input {
  width: 34px;
  height: 14px;
  background: #1673c8;
  color: #fff;
  font-size: 10px;
}

.clear {
  width: 21px;
}

.open {
  width: 19px;
  height: 19px;
  background: #2c2c2c;
  color: #fff;
}

.style-select,
.family,
.face,
.plain {
  height: 20px;
  padding-left: 5px;
  border: 1px solid #5d5d5d;
  background: #454545 url("data:image/svg+xml,%3Csvg xmlns='http://www.w3.org/2000/svg' width='18' height='20'%3E%3Cpath d='M.5 0v20' stroke='%235d5d5d'/%3E%3Cpath d='M5.500 8.500L9 11.700l3.500-3.200' fill='none' stroke='%23e8e8e8' stroke-width='1.600'/%3E%3C/svg%3E") no-repeat right center;
  color: #ececec;
}

.style-select {
  width: 72px;
  margin: 0 6px;
}

.size-spin {
  width: 83px;
}

.paragraph-link {
  width: 47px;
  margin-left: 7px;
  white-space: nowrap;
}

.envelope {
  gap: 5px;
  margin: 0 14px 0 8px;
  color: #e8e8e8;
}

.align-link {
  margin-right: 13px;
}

.bar-end {
  flex: 1;
  display: flex;
  align-items: center;
  gap: 12px;
  padding: 0 16px 0 14px;
}

.bar-end button {
  margin-left: auto;
}

/* font menu */
.font-menu {
  position: absolute;
  top: 20px;
  left: -1px;
  z-index: 10;
  width: 426px;
  border: 1px solid #3c3c3c;
  border-top-color: #d8d8d8;
  border-left: 0;
  background: #f2f2f2;
  box-shadow: 1px 1px 3px rgba(0, 0, 0, 0.4);
  color: #222;
  font-family: "DejaVu Sans Condensed", "Noto Sans", sans-serif;
  font-size: 12px;
}

.filter-bar {
  display: flex;
  align-items: center;
  height: 36px;
  padding-left: 5px;
  border-bottom: 1px solid #e2e2e2;
  color: #444;
}

.filter-bar label {
  width: 36px;
}

.filter-bar select {
  width: 107px;
  height: 24px;
  padding-left: 7px;
  border: 1px solid #dcdcdc;
  border-radius: 2px;
  background: #fafafa url("data:image/svg+xml,%3Csvg xmlns='http://www.w3.org/2000/svg' width='18' height='20'%3E%3Cpath d='M5.500 8.500L9 11.700l3.500-3.200' fill='none' stroke='%23555' stroke-width='1.300'/%3E%3C/svg%3E") no-repeat right center;
}

.tk-filter {
  width: 15px;
  height: 15px;
  margin: 0 15px 0 10px;
  border: 1px solid #666;
  font-size: 8px;
  font-weight: bold;
}

.similar {
  width: 16px;
  margin: 0 15px 0 14px;
  font-size: 18px;
  line-height: 20px;
}

.typekit {
  width: 172px;
  height: 24px;
  gap: 7px;
  border: 1px solid #444;
  border-radius: 12px;
  white-space: nowrap;
}

.tk {
  width: 13px;
  height: 13px;
  background: #12330c;
  color: #8fe03c;
  font-size: 8px;
  font-weight: bold;
  line-height: 13px;
}

.font-scroll {
  display: flex;
  background: #fcfcfc;
}

.font-list {
  flex: 1;
  margin: 0;
  padding: 0;
  list-style: none;
}

.font-list li {
  display: grid;
  grid-template-columns: 20px 35px 178px 26px 1fr;
  align-items: center;
  height: 21px;
  padding-left: 14px;
  background: #efefef;
  color: #111;
  white-space: nowrap;
}

.font-list li.current {
  background: #fcfcfc;
}

.font-list button svg {
  width: 14px;
  height: 14px;
  color: #444;
}

.font-list i svg {
  width: 10px;
  height: 10px;
  margin-left: 16px;
}

.kind {
  width: 20px;
  text-align: center;
}

.kind svg {
  width: 16px;
  height: 14px;
  margin: 0 auto;
}

.kind.ot {
  color: #666;
  font: italic 16px/20px "Liberation Serif", serif;
}

.font-list em {
  color: #000;
  font: 13px/18px "Liberation Serif", serif;
}

.font-list .s-script {
  font-size: 14px;
  font-style: italic;
}

.font-list .heavy {
  font-weight: bold;
}

.font-list .s-black {
  font: 900 12px/18px Lato, sans-serif;
}

.font-list .s-hand {
  font-size: 12px;
  font-style: italic;
}

.font-list .s-slab {
  font: bold 12px/18px "DejaVu Serif", serif;
}

.font-list .s-semi {
  font: bold 12px/18px Lato, sans-serif;
}

.font-list .s-bernard {
  font-weight: bold;
  font-size: 12px;
}

.font-list .s-birch {
  font-size: 9px;
}

.font-list .s-wide {
  font: bold 20px/20px "DejaVu Serif", serif;
}

.font-list .s-blackout {
  justify-self: start;
  padding: 0 1px;
  background: #000;
  color: #fff;
  font: bold 9px/11px "Liberation Sans", sans-serif;
}

.font-list .s-jinx {
  font: italic 900 12px/18px Inter, sans-serif;
}

.font-list .s-bobcat {
  font-size: 10px;
  font-variant: small-caps;
}

.font-list .s-bolster {
  font: 900 12px/18px Inter, sans-serif;
}

.font-list .s-book {
  font-size: 14px;
}

.font-list .s-bookman {
  font: 12px/18px "DejaVu Serif", serif;
}

.font-list .s-symbol {
  font: 14px/18px "DejaVu Sans", sans-serif;
}

.font-list .s-bradley {
  font-style: italic;
}

.menu-scrollbar {
  width: 13px;
  display: flex;
  flex-direction: column;
  align-items: center;
  color: #888;
}

.menu-scrollbar .thumb {
  width: 9px;
  height: 34px;
  margin: 24px 0 auto;
  border-radius: 4px;
  background: #d6d6d6;
}

/* workspace */
.workspace {
  flex: 1;
  display: flex;
  min-height: 0;
}

.collapse {
  height: 15px;
  padding: 0 6px;
  background: #424242;
  color: #d0d0d0;
  font-size: 14px;
  line-height: 11px;
  text-align: right;
}

.collapse.left {
  text-align: left;
}

.toolbox {
  width: 75px;
  flex: none;
  border-left: 1px solid #444;
  border-right: 2px solid #333;
}

.grip {
  width: 20px;
  height: 4px;
  margin: 1px 0 10px 25px;
  background: repeating-linear-gradient(90deg, #3c3c3c 0 1px, #535353 1px 2px);
}

.tools {
  display: grid;
  grid-template-columns: 30px 30px;
  padding-left: 6px;
}

.tools button {
  position: relative;
  height: 24px;
}

.tools button.active {
  height: 22px;
  width: 27px;
  margin: 1px 0 0 1px;
  background: #303030;
}

.tools svg {
  width: 19px;
  height: 19px;
}

.tools .more::after {
  content: "";
  position: absolute;
  right: 3px;
  bottom: 1px;
  border: 2px solid transparent;
  border-right-color: #c8c8c8;
  border-bottom-color: #c8c8c8;
}

.tools hr {
  grid-column: 1 / 3;
  width: 100%;
  height: 1px;
  margin: 2px 0;
  border: 0;
  background: #4c4c4c;
}

.gradient-tool {
  width: 17px;
  height: 14px;
  border: 1px solid #d2d2d2;
  background: linear-gradient(90deg, #444, #ccc);
}

.fill-stroke {
  margin: 7px 0 5px 6px;
}

.color-modes {
  display: flex;
  gap: 2px;
  padding-left: 6px;
  margin-bottom: 6px;
}

.color-modes button {
  width: 18px;
  height: 18px;
}

.color-modes .on {
  background: #383838;
}

.chip {
  width: 13px;
  height: 13px;
  border: 1px solid #111;
}

.chip.solid {
  background: #000;
}

.chip.fade {
  background: linear-gradient(90deg, #fff, #555);
}

.chip.none {
  background: linear-gradient(135deg, #fff 42%, #d0181f 42% 58%, #fff 58%);
}

.screen-mode {
  margin: 8px 0 0 24px;
}

.document {
  flex: 1;
  display: flex;
  flex-direction: column;
  min-width: 0;
}

.doc-tabs {
  display: flex;
  height: 30px;
  flex: none;
  background: #424242;
  border-bottom: 1px solid #383838;
}

.doc-tab {
  display: flex;
  align-items: center;
  gap: 12px;
  padding: 2px 8px 0 9px;
  border-right: 1px solid #333;
  background: #535353;
  color: #f0f0f0;
  font-family: "Open Sans", "Noto Sans", sans-serif;
  font-size: 11px;
  font-weight: 600;
  white-space: nowrap;
}

.canvas-row {
  flex: 1;
  display: flex;
  min-height: 0;
}

.canvas {
  flex: 1;
  display: flex;
  padding: 16px 45px 0 41px;
  background: #5e5e5e;
}

.artboard {
  position: relative;
  flex: 1;
  border: solid #222;
  border-width: 1px 1px 0;
  background: #fff;
}

.artwork {
  position: absolute;
  left: 67px;
  top: 47px;
}

.headline {
  font: italic 82px "Liberation Serif", serif;
  stroke: #000;
  stroke-width: 1;
}

.v-scroll {
  display: flex;
  align-items: flex-end;
  justify-content: center;
  width: 17px;
  padding-bottom: 4px;
  background: #4b4b4b;
  color: #999;
}

.statusbar {
  display: flex;
  align-items: center;
  height: 17px;
  flex: none;
  padding-left: 6px;
  border-top: 1px solid #444;
}

.statusbar .drop {
  height: 16px;
}

.statusbar input {
  height: 16px;
  background: #454545;
  color: #ececec;
}

.zoom {
  width: 48px;
}

.page {
  width: 40px;
  padding-left: 4px;
}

.pager {
  display: flex;
  justify-content: center;
  gap: 8px;
  width: 42px;
  fill: #777;
}

.tool-name {
  width: 200px;
  text-align: center;
  border-left: 1px solid #484848;
}

.play {
  width: 18px;
}

.h-scroll {
  flex: 1;
  display: flex;
  align-items: center;
  justify-content: space-between;
  height: 16px;
  padding: 0 20px 0 3px;
  background: #4b4b4b;
  color: #aaa;
}

.h-scroll span {
  width: 26px;
  height: 12px;
  border-radius: 6px;
  background: #6a6a6a;
}

.rail {
  width: 42px;
  flex: none;
  border: solid #383838;
  border-width: 0 3px 0 1px;
}

/* panels */
.panels {
  width: 239px;
  flex: none;
  display: flex;
  flex-direction: column;
}

.panel {
  border-bottom: 3px solid #363636;
}

.tabs {
  display: flex;
  align-items: center;
  height: 26px;
  background: #424242;
  color: #a0a0a0;
}

.tabs button {
  height: 26px;
  padding: 0 9px;
  font-weight: bold;
}

.tabs .selected {
  padding: 0 8px;
  background: #535353;
  color: #f0f0f0;
}

.tabs .libraries {
  padding-left: 6px;
}

.tabs .char-tab {
  padding-left: 11px;
}

.tabs .first {
  padding: 0 8px 0 6px;
}

.tabs svg {
  margin: 0 6px 0 auto;
}

.library-bar {
  display: flex;
  align-items: center;
  gap: 3px;
  padding: 5px 9px 6px 6px;
}

.plain {
  flex: 1;
  margin-right: 6px;
  padding-left: 6px;
  font-family: "Open Sans", "Noto Sans", sans-serif;
  background: #484848 url("data:image/svg+xml,%3Csvg xmlns='http://www.w3.org/2000/svg' width='18' height='20'%3E%3Cpath d='M5.500 8.500L9 11.700l3.500-3.200' fill='none' stroke='%23bbb' stroke-width='1.200'/%3E%3C/svg%3E") no-repeat right center;
  font-size: 12px;
}

.view {
  width: 22px;
  height: 22px;
}

.view.on {
  background: #333;
}

.library-search {
  display: flex;
  align-items: center;
  height: 24px;
  margin: 0 10px 4px 28px;
  border-bottom: 1px solid #5e5e5e;
}

.library-search input {
  flex: 1;
}

.library-search input::placeholder {
  color: #747474;
}

.library-content {
  height: 81px;
  padding: 12px 21px;
  background: #4d4d4d;
  color: #c0c0c0;
}

.panel-foot {
  display: flex;
  align-items: center;
  justify-content: flex-end;
  gap: 10px;
  height: 23px;
  padding-right: 21px;
}

.character {
  display: flex;
  flex-direction: column;
  gap: 6px;
  padding: 6px 5px 6px 8px;
}

.touch {
  align-self: flex-start;
  width: 110px;
  height: 22px;
  padding-left: 18px;
  border: 1px solid #6c6c6c;
  color: #e8e8e8;
}

.family {
  margin-right: 10px;
  padding-left: 22px;
}

.face {
  padding-left: 1px;
}

.metrics {
  display: grid;
  grid-template-columns: 13px 80px 1fr 80px;
  align-items: center;
  gap: 6px;
  padding-top: 7px;
}

.metrics > svg {
  justify-self: end;
}

.layers-panel {
  flex: 1;
  display: flex;
  flex-direction: column;
  border-bottom-width: 1px;
}

.layers {
  flex: 1;
  margin: 8px 5px 0;
  border: 1px solid #5d5d5d;
  border-top: 0;
}

.layer {
  position: relative;
  display: flex;
  align-items: center;
  height: 21px;
  padding: 0 7px 0 42px;
  border-bottom: 1px solid #4c4c4c;
}

.layer.child {
  background: #4c617a;
}

.bar {
  width: 4px;
  height: 19px;
  background: #5280f0;
}

.twist {
  margin: 0 8px;
  color: #e8e8e8;
}

.thumb-img {
  width: 18px;
  height: 18px;
  border: 1px solid #111;
  background: linear-gradient(#111, #111) 2px 7px / 12px 2px no-repeat #fff;
}

.child .thumb-img {
  margin-left: 49px;
}

.layer-name {
  flex: 1;
  padding-left: 5px;
  color: #e8e8e8;
}

.mark {
  width: 8px;
  height: 8px;
  margin-left: 5px;
  border: 1px solid #111;
  background: #5280f0;
}

/* folded corner of the current layer */
.corner {
  position: absolute;
  top: 0;
  right: 0;
  border: 3px solid transparent;
  border-top-color: #d8d8d8;
  border-right-color: #d8d8d8;
}

.layers-foot {
  display: flex;
  align-items: center;
  gap: 12px;
  height: 20px;
  padding: 0 27px 0 5px;
  margin-bottom: 1px;
}

.layers-foot span {
  flex: 1;
}

.bright {
  color: #d0d0d0;
}
```
